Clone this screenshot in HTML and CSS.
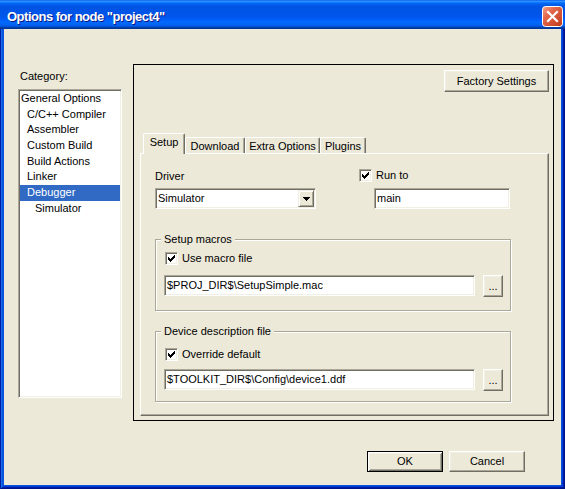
FILE: index.html
```html
<!DOCTYPE html>
<html lang="en">
<head>
<meta charset="utf-8">
<title>Options for node "project4"</title>
<link rel="stylesheet" href="styles.css">
</head>
<body>
<div class="window">
  <div class="titlebar">
    <span class="title">Options for node "project4"</span>
    <span class="close" aria-label="Close">
      <svg width="21" height="21" viewBox="0 0 21 21"><defs><linearGradient id="cg" x1="0" y1="0" x2="1" y2="1"><stop offset="0" stop-color="#f4a58c"/><stop offset="0.35" stop-color="#e2664a"/><stop offset="1" stop-color="#c0381a"/></linearGradient></defs><rect x="0.5" y="0.5" width="20" height="20" rx="3" fill="url(#cg)" stroke="#fff"/><path d="M6 6L15 15M15 6L6 15" stroke="#fff" stroke-width="2.2" stroke-linecap="square"/></svg>
    </span>
  </div>
  <div class="client">
    <div class="main">
      <div class="category">
        <div class="cat-label">Category:</div>
        <ul class="listbox">
          <li class="lvl0">General Options</li>
          <li class="lvl1">C/C++ Compiler</li>
          <li class="lvl1">Assembler</li>
          <li class="lvl1">Custom Build</li>
          <li class="lvl1">Build Actions</li>
          <li class="lvl1">Linker</li>
          <li class="lvl1 selected">Debugger</li>
          <li class="lvl2">Simulator</li>
        </ul>
      </div>
      <div class="panel">
        <div class="panel-top"><button class="btn factory">Factory Settings</button></div>
        <div class="tabs">
          <div class="tab active tab-setup">Setup</div>
          <div class="tab tab-download">Download</div>
          <div class="tab tab-extra">Extra Options</div>
          <div class="tab tab-plugins">Plugins</div>
        </div>
        <div class="tabpage">
          <div class="top-row">
            <div class="driver-col">
              <div class="lbl">Driver</div>
              <div class="combo">
                <span class="combo-text">Simulator</span>
                <span class="combo-btn"><svg width="7" height="4" viewBox="0 0 7 4" shape-rendering="crispEdges"><path d="M0 0h7v1h-7zM1 1h5v1h-5zM2 2h3v1h-3zM3 3h1v1h-1z" fill="#000"/></svg></span>
              </div>
            </div>
            <div class="runto-col">
              <div class="check-row">
                <span class="checkbox"><svg width="7" height="7" viewBox="0 0 7 7" shape-rendering="crispEdges"><path d="M6 0h1v1h-1zM5 1h2v1h-2zM0 2h1v1h-1zM4 2h3v1h-3zM0 3h2v1h-2zM3 3h3v1h-3zM0 4h5v1h-5zM1 5h3v1h-3zM2 6h1v1h-1z" fill="#000"/></svg></span>
                <span>Run to</span>
              </div>
              <div class="field runto-field">main</div>
            </div>
          </div>

          <div class="group g1">
            <div class="group-title">Setup macros</div>
            <div class="check-row">
              <span class="checkbox"><svg width="7" height="7" viewBox="0 0 7 7" shape-rendering="crispEdges"><path d="M6 0h1v1h-1zM5 1h2v1h-2zM0 2h1v1h-1zM4 2h3v1h-3zM0 3h2v1h-2zM3 3h3v1h-3zM0 4h5v1h-5zM1 5h3v1h-3zM2 6h1v1h-1z" fill="#000"/></svg></span>
              <span>Use macro file</span>
            </div>
            <div class="path-row">
              <div class="field path">$PROJ_DIR$\SetupSimple.mac</div>
              <button class="btn browse">...</button>
            </div>
          </div>

          <div class="group g2">
            <div class="group-title">Device description file</div>
            <div class="check-row">
              <span class="checkbox"><svg width="7" height="7" viewBox="0 0 7 7" shape-rendering="crispEdges"><path d="M6 0h1v1h-1zM5 1h2v1h-2zM0 2h1v1h-1zM4 2h3v1h-3zM0 3h2v1h-2zM3 3h3v1h-3zM0 4h5v1h-5zM1 5h3v1h-3zM2 6h1v1h-1z" fill="#000"/></svg></span>
              <span>Override default</span>
            </div>
            <div class="path-row">
              <div class="field path">$TOOLKIT_DIR$\Config\device1.ddf</div>
              <button class="btn browse">...</button>
            </div>
          </div>
        </div>
      </div>
    </div>
    <div class="footer">
      <button class="btn dlg default">OK</button>
      <button class="btn dlg">Cancel</button>
    </div>
  </div>
</div>
</body>
</html>
```

FILE: styles.css
```css
* { box-sizing: border-box; }
html, body { margin: 0; padding: 0; background: #ece9d8; }
body {
  font-family: "Liberation Sans", Arial, sans-serif;
  font-size: 11px;
  line-height: 13px;
  color: #000;
}

.window {
  width: 565px;
  height: 489px;
  display: flex;
  flex-direction: column;
  background: #0855dd;
  box-shadow: inset 1px 0 #001ea0, inset -1px -1px #00138c,
              inset 2px 0 #166aee, inset -2px -2px #001ea0,
              inset 3px 0 #0855dd, inset -3px -3px #003bda;
}

/* ---------- title bar ---------- */
.titlebar {
  height: 29px;
  flex: none;
  display: flex;
  align-items: flex-start;
  padding: 6px 2px 0 7px;
  background: linear-gradient(180deg, #0058ee 0%, #3593ff 4%, #288eff 6%, #127dff 8%, #036ffc 10%, #0262ee 14%, #0057e5 20%, #0054e3 24%, #0055eb 56%, #005bf5 66%, #026afe 76%, #0062ef 86%, #0052d6 92%, #0040ab 94%, #003092 100%);
}
.title {
  margin-top: 3px;
  color: #fff;
  font-weight: bold;
  font-size: 13px;
  line-height: 15px;
  letter-spacing: -0.5px;
  text-shadow: 1px 1px #0a1883;
  white-space: nowrap;
}
.close { margin-left: auto; width: 21px; height: 21px; }
.close svg { display: block; }

/* ---------- client ---------- */
.client {
  flex: 1;
  margin: 0 4px 4px;
  background: #ece9d8;
  padding: 35px 7px 0 14px;
  display: flex;
  flex-direction: column;
}
.main { display: flex; gap: 11px; }

.category { width: 104px; display: flex; flex-direction: column; }
.cat-label { margin: 6px 0 0 2px; height: 13px; }
.listbox {
  list-style: none;
  margin: 6px 0 0;
  padding: 0;
  height: 309px;
  background: #fff;
  border: 1px solid;
  border-color: #aca899 #fff #fff #aca899;
  box-shadow: inset 1px 1px #716f64, inset -1px -1px #f1efe2;
  padding: 1px;
}
.listbox li { height: 15.7px; line-height: 15.7px; white-space: nowrap; }
.lvl0 { padding-left: 1px; }
.lvl1 { padding-left: 7px; }
.lvl2 { padding-left: 15px; }
.listbox .selected { background: #316ac5; color: #fff; }

/* ---------- options panel ---------- */
.panel {
  width: 421px;
  height: 357px;
  border: 1px solid #000;
  padding: 5px 4px 4px 6px;
  display: flex;
  flex-direction: column;
}
.panel-top { display: flex; justify-content: flex-end; }

.btn {
  font: inherit;
  color: #000;
  background: #ece9d8;
  border: 1px solid;
  border-color: #fff #716f64 #716f64 #fff;
  box-shadow: inset -1px -1px #aca899, inset 1px 1px #f1efe2;
  padding: 0;
  margin: 0;
  line-height: 13px;
}
.factory { width: 105px; height: 22px; }

.tabs {
  display: flex;
  align-items: flex-end;
  height: 20px;
  margin-top: 41px;
  padding-left: 3px;
}
.tab {
  height: 16px;
  padding-top: 2px;
  text-align: center;
  white-space: nowrap;
  border-top: 1px solid #fff;
  border-left: 1px solid #fff;
  border-right: 1px solid #716f64;
  box-shadow: inset -1px 0 #aca899;
  border-radius: 2px 2px 0 0;
  background: #ece9d8;
}
.tab.active {
  height: 21px;
  margin-bottom: -1px;
  position: relative;
  z-index: 1;
}
.tab-setup { width: 42px; }
.tab-download { width: 60px; }
.tab-extra { width: 75px; }
.tab-plugins { width: 46px; }

.tabpage {
  flex: 1;
  border: 1px solid;
  border-color: #fff #716f64 #716f64 #fff;
  box-shadow: inset -1px -1px #aca899;
  padding: 15px 0 0 14px;
}

.top-row {
  display: grid;
  grid-template-columns: 161px 151px;
  column-gap: 43px;
}
.lbl { margin-top: 1px; height: 13px; }

.field {
  height: 21px;
  background: #fff;
  border: 1px solid;
  border-color: #aca899 #fff #fff #aca899;
  box-shadow: inset 1px 1px #716f64, inset -1px -1px #f1efe2;
  padding: 0 2px;
  line-height: 19px;
  white-space: nowrap;
  overflow: hidden;
}
.combo {
  margin-top: 5px;
  height: 21px;
  display: flex;
  background: #fff;
  border: 1px solid;
  border-color: #aca899 #fff #fff #aca899;
  box-shadow: inset 1px 1px #716f64, inset -1px -1px #f1efe2;
  padding: 1px;
}
.combo-text { flex: 1; padding-left: 1px; line-height: 17px; }
.combo-btn {
  width: 16px;
  height: 17px;
  background: #ece9d8;
  border: 1px solid;
  border-color: #f1efe2 #716f64 #716f64 #f1efe2;
  box-shadow: inset 1px 1px #fff, inset -1px -1px #aca899;
  display: flex;
  align-items: center;
  justify-content: center;
}
.combo-btn svg { display: block; }

.check-row {
  display: flex;
  align-items: center;
  gap: 4px;
  height: 13px;
  white-space: nowrap;
}
.checkbox {
  width: 13px;
  height: 13px;
  flex: none;
  background: #fff;
  border: 1px solid;
  border-color: #aca899 #fff #fff #aca899;
  box-shadow: inset 1px 1px #716f64, inset -1px -1px #f1efe2;
  padding: 2px;
}
.checkbox svg { display: block; }

.runto-field { margin: 6px 0 0 15px; width: 136px; }

/* ---------- group boxes ---------- */
.group {
  width: 356px;
  border: 1px solid #aca899;
  box-shadow: 1px 1px 0 #fff, inset 1px 1px 0 #fff;
  padding: 0 6px 13px 8px;
}
.group-title {
  width: fit-content;
  height: 13px;
  margin: -7px 0 0 -3px;
  padding: 0 3px;
  background: #ece9d8;
  white-space: nowrap;
}
.g1 { margin-top: 30px; }
.g1 .check-row { margin: 6px 0 0 1px; }
.g1 .path-row { margin-top: 10px; }
.g2 { margin-top: 20px; padding-bottom: 10px; }
.g2 .check-row { margin: 10px 0 0 1px; }
.g2 .path-row { margin-top: 8px; }

.path-row { display: flex; gap: 8px; align-items: flex-start; }
.path { width: 311px; }
.browse { width: 20px; height: 22px; }

/* ---------- footer ---------- */
.footer {
  display: flex;
  justify-content: flex-end;
  gap: 6px;
  margin: 30px 29px 0 0;
}
.dlg { width: 76px; height: 21px; }
.dlg.default {
  border: 1px solid #000;
  box-shadow: inset 1px 1px #fff, inset -1px -1px #716f64, inset 2px 2px #f1efe2, inset -2px -2px #aca899;
}
```
